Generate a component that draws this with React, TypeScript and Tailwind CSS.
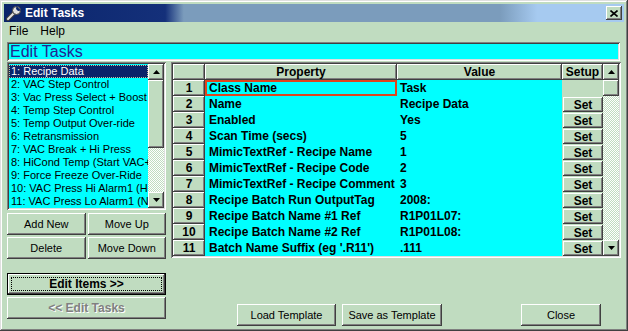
const raised =
  "bg-[#c0dcc0] shadow-[inset_-1px_-1px_0_#404040,inset_1px_1px_0_#ffffff,inset_-2px_-2px_0_#808080]";
const sunken =
  "shadow-[inset_1px_1px_0_#808080,inset_-1px_-1px_0_#ffffff,inset_2px_2px_0_#404040,inset_-2px_-2px_0_#dfdfdf]";
const checker = "bg-[repeating-conic-gradient(#ffffff_0%_25%,#c0dcc0_0%_50%)] bg-[length:2px_2px]";

const tasks = [
  "1: Recipe Data",
  "2: VAC Step Control",
  "3: Vac Press Select + Boost",
  "4: Temp Step Control",
  "5: Temp Output Over-ride",
  "6: Retransmission",
  "7: VAC Break + Hi Press",
  "8: HiCond Temp (Start VAC+H",
  "9: Force Freeze Over-Ride",
  "10: VAC Press Hi Alarm1 (Hol",
  "11: VAC Press Lo Alarm1 (N2",
];

const rows: [string, string][] = [
  ["Class Name", "Task"],
  ["Name", "Recipe Data"],
  ["Enabled", "Yes"],
  ["Scan Time (secs)", "5"],
  ["MimicTextRef - Recipe Name", "1"],
  ["MimicTextRef - Recipe Code", "2"],
  ["MimicTextRef - Recipe Comment", "3"],
  ["Recipe Batch Run OutputTag", "2008:"],
  ["Recipe Batch Name #1 Ref", "R1P01L07:"],
  ["Recipe Batch Name #2 Ref", "R1P01L08:"],
  ["Batch Name Suffix (eg '.R11')", ".111"],
];

function Arrow({ down }: { down?: boolean }) {
  return (
    <svg width="7" height="4" viewBox="0 0 7 4">
      <polygon points={down ? "0,0 7,0 3.5,4" : "3.5,0 7,4 0,4"} fill="#000" />
    </svg>
  );
}

function Btn({ label, className = "" }: { label: string; className?: string }) {
  return (
    <div className={`${raised} h-[22px] flex items-center justify-center text-[11px] text-black ${className}`}>
      {label}
    </div>
  );
}

export default function App() {
  return (
    <div className="w-[628px] h-[331px] bg-[#c0dcc0] p-[4px] font-['Liberation_Sans',Arial,sans-serif] shadow-[inset_-1px_-1px_0_#404040,inset_1px_1px_0_#dfdfdf,inset_-2px_-2px_0_#808080,inset_2px_2px_0_#ffffff] flex flex-col overflow-hidden">
      {/* Title bar */}
      <div className="h-[18px] flex items-center bg-[linear-gradient(90deg,#0a246a_0%,#14307a_26%,#7b9cbc_29%,#7b9cbc_80%,#a6caf0_86%,#a6caf0_100%)] pl-[2px] pr-[2px]">
        <svg width="16" height="16" viewBox="0 0 16 16" className="mr-[3px]">
          <path d="M2 14 L8 8" stroke="#404040" strokeWidth="4" strokeLinecap="round" />
          <path d="M2 14 L8 8" stroke="#e0e0e0" strokeWidth="2" strokeLinecap="round" />
          <circle cx="10.5" cy="5.5" r="4" fill="#e0e0e0" stroke="#404040" strokeWidth="1" />
          <path d="M10.5 1 L15 5.5 L12 6 L10 4 Z" fill="#0a246a" />
        </svg>
        <span className="text-white font-bold text-[12px]">Edit Tasks</span>
        <div className={`${raised} ml-auto w-[16px] h-[14px] flex items-center justify-center`}>
          <svg width="8" height="7" viewBox="0 0 8 7">
            <path d="M0.5 0.5 L7.5 6.5 M7.5 0.5 L0.5 6.5" stroke="#000" strokeWidth="1.6" />
          </svg>
        </div>
      </div>

      {/* Menu */}
      <div className="h-[18px] flex items-center text-[12px] text-black pl-[5px] gap-[12px]">
        <span>File</span>
        <span>Help</span>
      </div>

      {/* Header */}
      <div className={`mt-[2px] ml-[3px] mr-[4px] h-[19px] bg-[#00ffff] ${sunken} flex items-center pl-[3px]`}>
        <span className="text-[16px] text-[#242490]">Edit Tasks</span>
      </div>

      {/* Main */}
      <div className="mt-[1px] ml-[3px] mr-[3px] flex gap-[5px] flex-1">
        {/* Left column */}
        <div className="w-[159px] flex flex-col">
          <div className={`h-[148px] bg-[#00ffff] ${sunken} p-[2px] flex`}>
            <div className="flex-1 overflow-hidden pt-[1px] text-[11px] leading-[13px] text-black">
              {tasks.map((t, i) => (
                <div
                  key={t}
                  className={`whitespace-nowrap overflow-hidden pl-[2px] h-[13px] ${i === 0 ? "bg-[#0a246a] text-white outline-1 outline-dotted outline-[#c0c0a0] -outline-offset-1" : ""}`}
                >
                  {t}
                </div>
              ))}
            </div>
            <div className="w-[16px] flex flex-col">
              <div className={`${raised} h-[16px] flex items-center justify-center`}>
                <Arrow />
              </div>
              <div className={`${raised} h-[68px]`} />
              <div className={`flex-1 ${checker}`} />
              <div className={`${raised} h-[16px] flex items-center justify-center`}>
                <Arrow down />
              </div>
            </div>
          </div>
          <div className="mt-[3px] flex gap-[2px]">
            <Btn label="Add New" className="flex-1" />
            <Btn label="Move Up" className="flex-1" />
          </div>
          <div className="mt-[2px] flex gap-[2px]">
            <Btn label="Delete" className="flex-1" />
            <Btn label="Move Down" className="flex-1" />
          </div>
          <div className="mt-[14px] h-[22px] border border-black">
            <div className={`${raised} h-full p-[3px]`}>
              <div className="h-full border border-dotted border-black flex items-center justify-center text-[12px] font-bold text-black">
                Edit Items &gt;&gt;
              </div>
            </div>
          </div>
          <div className={`${raised} mt-[2px] h-[22px] flex items-center justify-center text-[12px] font-bold text-[#808080] [text-shadow:1px_1px_0_#ffffff]`}>
            &lt;&lt; Edit Tasks
          </div>
        </div>

        {/* Right column */}
        <div className="flex-1 flex flex-col">
          <div className={`h-[196px] ${sunken} p-[2px] flex`}>
            <div className="flex-1 flex flex-col">
              <div className="h-[16px] flex text-[12px] font-bold text-black">
                <div className={`${raised} w-[32px]`} />
                <div className={`${raised} w-[192px] flex items-center justify-center`}>Property</div>
                <div className={`${raised} w-[165px] flex items-center justify-center`}>Value</div>
                <div className={`${raised} w-[41px] flex items-center justify-center`}>Setup</div>
              </div>
              {rows.map(([p, v], i) => (
                <div key={p} className="h-[16px] flex text-[12px] font-bold text-black">
                  <div className={`${raised} w-[32px] flex items-center justify-center`}>{i + 1}</div>
                  <div
                    className={`w-[192px] bg-[#00ffff] flex items-center whitespace-nowrap overflow-hidden ${i === 0 ? "border-2 border-[#e0441c] pl-[2px]" : "pl-[4px]"}`}
                  >
                    {p}
                  </div>
                  <div className="w-[165px] bg-[#00ffff] flex items-center pl-[3px] whitespace-nowrap overflow-hidden">{v}</div>
                  <div className="w-[41px] flex">
                    {i > 0 && (
                      <div className={`${raised} flex-1 flex items-center justify-center mt-[1px] ml-[1px]`}>Set</div>
                    )}
                  </div>
                </div>
              ))}
            </div>
            <div className="w-[16px] flex flex-col">
              <div className={`${raised} h-[16px] flex items-center justify-center`}>
                <Arrow />
              </div>
              <div className={`${raised} h-[16px]`} />
              <div className={`flex-1 ${checker}`} />
              <div className={`${raised} h-[16px] flex items-center justify-center`}>
                <Arrow down />
              </div>
            </div>
          </div>
          <div className="mt-auto mb-[1px] flex pl-[66px] pr-[20px] gap-[6px]">
            <Btn label="Load Template" className="w-[99px]" />
            <Btn label="Save as Template" className="w-[100px]" />
            <Btn label="Close" className="w-[80px] ml-auto" />
          </div>
        </div>
      </div>
    </div>
  );
}
